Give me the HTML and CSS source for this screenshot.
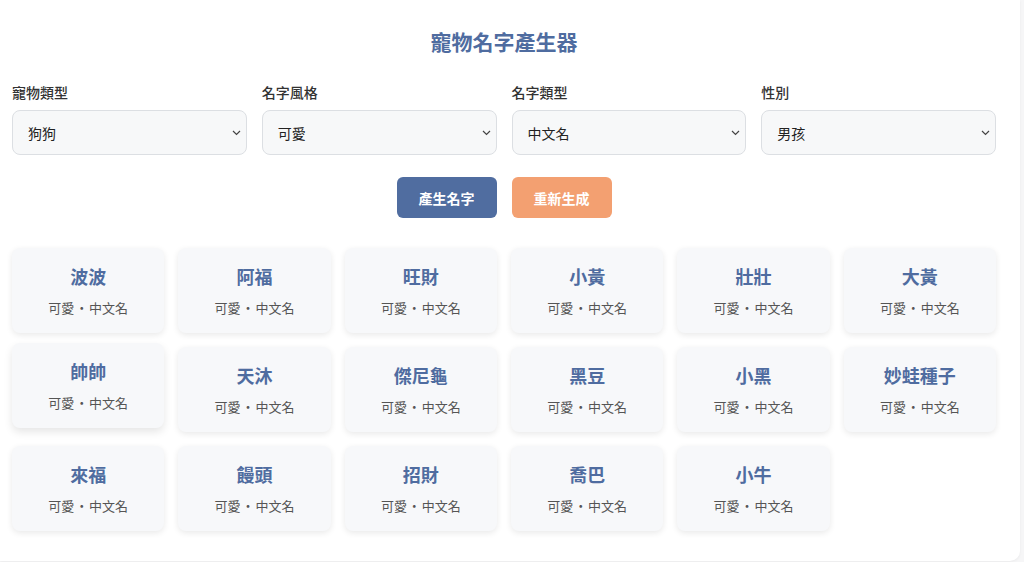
FILE: index.html
```html
<!DOCTYPE html>
<html lang="zh-Hant">
<head>
<meta charset="utf-8">
<title>寵物名字產生器</title>
<link rel="stylesheet" href="styles.css">
</head>
<body>
<div class="page">
  <h1 class="title">寵物名字產生器</h1>
  <div class="filters">
    <div class="field">
      <label class="label">寵物類型</label>
      <div class="select-wrap">
        <select class="select"><option>狗狗</option></select>
        <svg class="chev" width="9" height="6" viewBox="0 0 9 6"><path d="M1 1 L4.5 4.5 L8 1" fill="none" stroke="#444" stroke-width="1.2"/></svg>
      </div>
    </div>
    <div class="field">
      <label class="label">名字風格</label>
      <div class="select-wrap">
        <select class="select"><option>可愛</option></select>
        <svg class="chev" width="9" height="6" viewBox="0 0 9 6"><path d="M1 1 L4.5 4.5 L8 1" fill="none" stroke="#444" stroke-width="1.2"/></svg>
      </div>
    </div>
    <div class="field">
      <label class="label">名字類型</label>
      <div class="select-wrap">
        <select class="select"><option>中文名</option></select>
        <svg class="chev" width="9" height="6" viewBox="0 0 9 6"><path d="M1 1 L4.5 4.5 L8 1" fill="none" stroke="#444" stroke-width="1.2"/></svg>
      </div>
    </div>
    <div class="field">
      <label class="label">性別</label>
      <div class="select-wrap">
        <select class="select"><option>男孩</option></select>
        <svg class="chev" width="9" height="6" viewBox="0 0 9 6"><path d="M1 1 L4.5 4.5 L8 1" fill="none" stroke="#444" stroke-width="1.2"/></svg>
      </div>
    </div>
  </div>
  <div class="actions">
    <button class="btn btn-primary">產生名字</button>
    <button class="btn btn-secondary">重新生成</button>
  </div>
  <div class="grid">
    <div class="card"><div class="name">波波</div><div class="meta">可愛 · 中文名</div></div>
    <div class="card"><div class="name">阿福</div><div class="meta">可愛 · 中文名</div></div>
    <div class="card"><div class="name">旺財</div><div class="meta">可愛 · 中文名</div></div>
    <div class="card"><div class="name">小黃</div><div class="meta">可愛 · 中文名</div></div>
    <div class="card"><div class="name">壯壯</div><div class="meta">可愛 · 中文名</div></div>
    <div class="card"><div class="name">大黃</div><div class="meta">可愛 · 中文名</div></div>
    <div class="card raised"><div class="name">帥帥</div><div class="meta">可愛 · 中文名</div></div>
    <div class="card"><div class="name">天沐</div><div class="meta">可愛 · 中文名</div></div>
    <div class="card"><div class="name">傑尼龜</div><div class="meta">可愛 · 中文名</div></div>
    <div class="card"><div class="name">黑豆</div><div class="meta">可愛 · 中文名</div></div>
    <div class="card"><div class="name">小黑</div><div class="meta">可愛 · 中文名</div></div>
    <div class="card"><div class="name">妙蛙種子</div><div class="meta">可愛 · 中文名</div></div>
    <div class="card"><div class="name">來福</div><div class="meta">可愛 · 中文名</div></div>
    <div class="card"><div class="name">饅頭</div><div class="meta">可愛 · 中文名</div></div>
    <div class="card"><div class="name">招財</div><div class="meta">可愛 · 中文名</div></div>
    <div class="card"><div class="name">喬巴</div><div class="meta">可愛 · 中文名</div></div>
    <div class="card"><div class="name">小牛</div><div class="meta">可愛 · 中文名</div></div>
  </div>
</div>
</body>
</html>
```

FILE: styles.css
```css
* { box-sizing: border-box; }
html, body {
  margin: 0;
  padding: 0;
}
body {
  background: #f6f6f7;
  font-family: "Noto Sans CJK TC", "Noto Sans", sans-serif;
  color: #333;
  height: 562px;
  overflow: hidden;
}
.page {
  width: 1020px;
  height: 561px;
  background: #ffffff;
  border-radius: 0 0 10px 0;
  box-shadow: 0 1px 3px rgba(0, 0, 0, 0.05);
  padding: 27px 24px 0 12px;
}
.title {
  margin: 0;
  font-size: 21px;
  line-height: 29px;
  font-weight: 700;
  color: #4f6ca0;
  text-align: center;
}
.filters {
  margin-top: 26px;
  display: grid;
  grid-template-columns: repeat(4, 1fr);
  gap: 15px;
}
.field {
  display: flex;
  flex-direction: column;
}
.label {
  font-size: 14px;
  line-height: 20px;
  font-weight: 500;
  color: #333;
  margin-bottom: 8px;
}
.select-wrap {
  position: relative;
}
.select {
  appearance: none;
  -webkit-appearance: none;
  width: 100%;
  height: 45px;
  padding: 0 15px;
  border: 1px solid #dcdfe3;
  border-radius: 8px;
  background: #f7f8f9;
  font-family: inherit;
  font-size: 14px;
  color: #222;
  outline: none;
}
.chev {
  position: absolute;
  right: 6px;
  top: 20px;
  pointer-events: none;
}
.actions {
  margin-top: 22px;
  display: flex;
  justify-content: center;
  gap: 15px;
}
.btn {
  width: 100px;
  height: 41px;
  border: none;
  border-radius: 6px;
  font-family: inherit;
  font-size: 14px;
  font-weight: 700;
  color: #fff;
  padding: 0;
}
.btn-primary { background: #506da0; }
.btn-secondary { background: #f3a071; }
.grid {
  margin-top: 30px;
  display: grid;
  grid-template-columns: repeat(6, 1fr);
  gap: 14px;
}
.card {
  height: 85px;
  background: #f7f8fa;
  border-radius: 8px;
  box-shadow: 0 2px 6px rgba(0, 0, 0, 0.09);
  padding-top: 15px;
  text-align: center;
}
.card.raised {
  transform: translateY(-4px);
  box-shadow: 0 4px 8px rgba(0, 0, 0, 0.1);
}
.name {
  font-size: 18px;
  line-height: 27px;
  font-weight: 700;
  color: #4f6ca0;
}
.meta {
  margin-top: 8px;
  font-size: 13px;
  line-height: 20px;
  color: #555;
  word-spacing: -2px;
}
```
